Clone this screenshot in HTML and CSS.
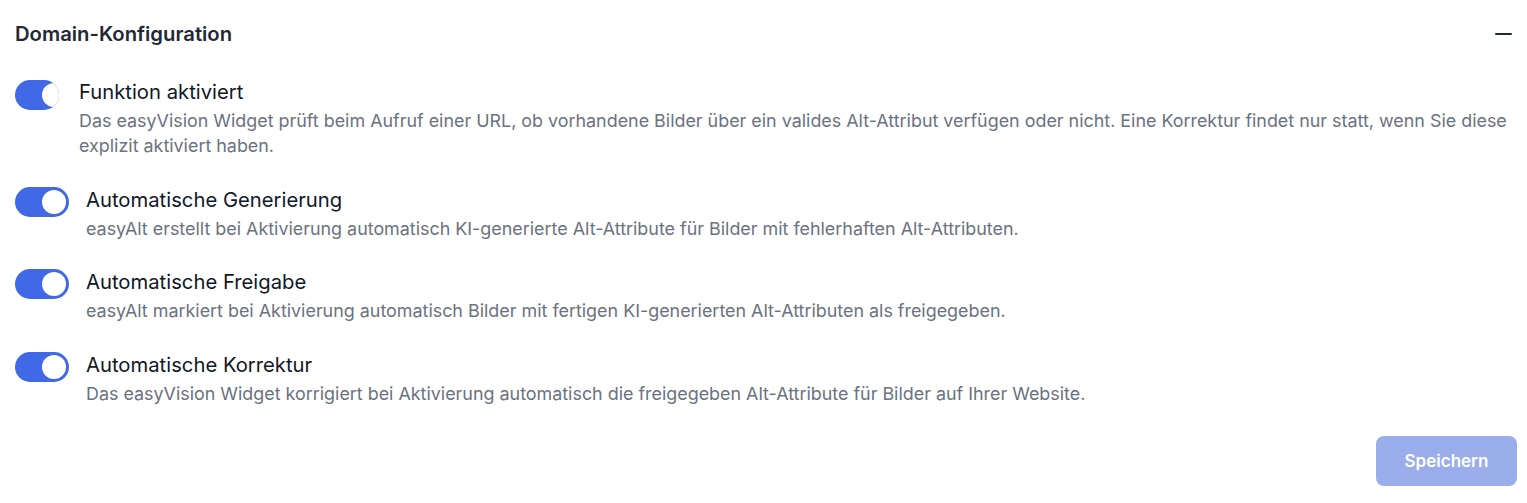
FILE: index.html
```html
<!DOCTYPE html>
<html lang="de">
<head>
<meta charset="utf-8">
<title>Domain-Konfiguration</title>
<link rel="stylesheet" href="styles.css">
</head>
<body>
<section class="panel">
  <header class="panel-header">
    <h2 class="panel-title">Domain-Konfiguration</h2>
    <button class="collapse-btn" aria-label="Einklappen"><span class="minus"></span></button>
  </header>
  <div class="settings">
    <div class="setting">
      <span class="toggle toggle-squeezed"><span class="knob"></span></span>
      <div class="setting-text">
        <div class="setting-label">Funktion aktiviert</div>
        <div class="setting-desc">Das easyVision Widget prüft beim Aufruf einer URL, ob vorhandene Bilder über ein valides Alt-Attribut verfügen oder nicht. Eine Korrektur findet nur statt, wenn Sie diese explizit aktiviert haben.</div>
      </div>
    </div>
    <div class="setting">
      <span class="toggle"><span class="knob"></span></span>
      <div class="setting-text">
        <div class="setting-label">Automatische Generierung</div>
        <div class="setting-desc">easyAlt erstellt bei Aktivierung automatisch KI-generierte Alt-Attribute für Bilder mit fehlerhaften Alt-Attributen.</div>
      </div>
    </div>
    <div class="setting">
      <span class="toggle"><span class="knob"></span></span>
      <div class="setting-text">
        <div class="setting-label">Automatische Freigabe</div>
        <div class="setting-desc">easyAlt markiert bei Aktivierung automatisch Bilder mit fertigen KI-generierten Alt-Attributen als freigegeben.</div>
      </div>
    </div>
    <div class="setting">
      <span class="toggle"><span class="knob"></span></span>
      <div class="setting-text">
        <div class="setting-label">Automatische Korrektur</div>
        <div class="setting-desc">Das easyVision Widget korrigiert bei Aktivierung automatisch die freigegeben Alt-Attribute für Bilder auf Ihrer Website.</div>
      </div>
    </div>
  </div>
  <div class="actions">
    <button class="save-btn" disabled>Speichern</button>
  </div>
</section>
</body>
</html>
```

FILE: styles.css
```css
* { box-sizing: border-box; }
html, body { margin: 0; padding: 0; background: #ffffff; }
body {
  font-family: Inter, "Noto Sans", "Liberation Sans", sans-serif;
  color: #111827;
}
.panel {
  padding: 0 10px 0 15px;
}
.panel-header {
  display: flex;
  align-items: center;
  justify-content: space-between;
  padding: 21px 5px 0 0;
}
.panel-title {
  margin: 0;
  font-size: 20.25px;
  line-height: 26px;
  font-weight: 600;
  color: #1f2937;
}
.collapse-btn {
  border: 0;
  background: transparent;
  padding: 0;
  width: 17px;
  height: 26px;
  display: flex;
  align-items: center;
  cursor: pointer;
}
.minus {
  display: block;
  width: 17px;
  height: 2px;
  border-radius: 1px;
  background: #1f2937;
}
.settings {
  display: flex;
  flex-direction: column;
  gap: 27.5px;
  margin-top: 31px;
}
.setting {
  display: flex;
  align-items: flex-start;
}
.toggle {
  position: relative;
  flex: 0 0 auto;
  width: 54px;
  height: 30px;
  margin-top: 1px;
  margin-right: 17px;
  border-radius: 15px;
  background: #4169e6;
  overflow: hidden;
}
.toggle-squeezed {
  width: 44px;
  margin-top: 2px;
  margin-right: 20px;
}
.knob {
  position: absolute;
  top: 3px;
  left: 27px;
  width: 24px;
  height: 24px;
  border-radius: 50%;
  background: #ffffff;
}
.setting-text {
  flex: 1 1 auto;
  min-width: 0;
}
.setting-label {
  font-size: 20.25px;
  line-height: 28px;
  color: #111827;
}
.setting-desc {
  margin-top: 2px;
  font-size: 17.9px;
  line-height: 25px;
  color: #6b7280;
}
.actions {
  display: flex;
  justify-content: flex-end;
  margin-top: 30px;
}
.save-btn {
  width: 141px;
  height: 50px;
  border: 0;
  border-radius: 8px;
  background: #9aaeeb;
  color: #ffffff;
  font-family: inherit;
  font-size: 17px;
  font-weight: 600;
}
```
